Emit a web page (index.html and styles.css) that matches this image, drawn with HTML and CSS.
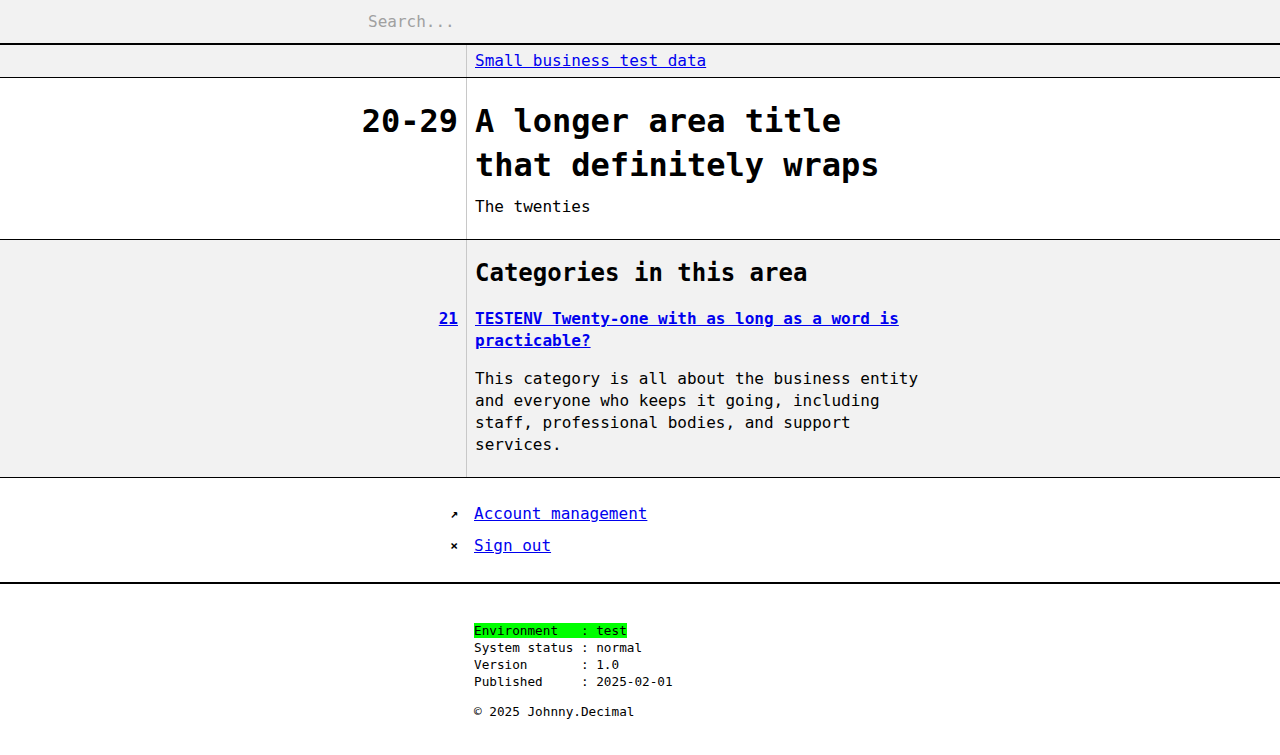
FILE: index.html
```html
<!DOCTYPE html>
<html lang="en">
<head>
<meta charset="utf-8">
<title>20-29 A longer area title that definitely wraps</title>
<link rel="stylesheet" href="styles.css">
</head>
<body>
<header class="search-bar">
  <div class="wrap">
    <input class="search-input" type="text" placeholder="Search...">
  </div>
</header>

<nav class="band band-grey band-crumbs">
  <div class="wrap grid">
    <div class="gutter crumbs-cell"></div>
    <div class="main crumbs-cell"><a href="#">Small business test data</a></div>
  </div>
</nav>

<section class="band band-area">
  <div class="wrap grid">
    <div class="gutter area-cell"><div class="area-id">20-29</div></div>
    <div class="main area-cell">
      <h1 class="area-title">A longer area title that definitely wraps</h1>
      <p class="area-sub">The twenties</p>
    </div>
  </div>
</section>

<section class="band band-grey band-cats">
  <div class="wrap grid">
    <div class="gutter cats-top"></div>
    <div class="main cats-top"><h2 class="cats-title">Categories in this area</h2></div>
    <div class="gutter cats-bottom"><a class="cat-id" href="#">21</a></div>
    <div class="main cats-bottom">
      <a class="cat-link" href="#">TESTENV Twenty-one with as long as a word is practicable?</a>
      <p class="cat-desc">This category is all about the business entity and everyone who keeps it going, including staff, professional bodies, and support services.</p>
    </div>
  </div>
</section>

<section class="band band-account">
  <ul class="wrap account-list">
    <li class="account-item"><span class="account-icon">↗</span><a href="#">Account management</a></li>
    <li class="account-item"><span class="account-icon">×</span><a href="#">Sign out</a></li>
  </ul>
</section>

<footer class="site-footer">
  <div class="wrap footer-inner">
    <div class="status">
      <div class="status-line"><span class="env">Environment   : test</span></div>
      <div class="status-line">System status : normal</div>
      <div class="status-line">Version       : 1.0</div>
      <div class="status-line">Published     : 2025-02-01</div>
    </div>
    <div class="copyright">© 2025 Johnny.Decimal</div>
  </div>
</footer>
</body>
</html>
```

FILE: styles.css
```css
* {
  box-sizing: border-box;
}

html, body {
  margin: 0;
  padding: 0;
  background: #fff;
  color: #000;
  font-family: "DejaVu Sans Mono", "Liberation Mono", monospace;
  font-size: 16px;
  line-height: 22px;
}

a {
  color: #0000ee;
}

.wrap {
  width: 560px;
  margin: 0 auto;
}

/* search */
.search-bar {
  background: #f2f2f2;
  border-bottom: 2px solid #000;
  height: 45px;
}

.search-input {
  display: block;
  width: 100%;
  height: 43px;
  border: none;
  background: transparent;
  padding: 0 8px;
  font-family: inherit;
  font-size: 16px;
  color: #000;
  outline: none;
}

.search-input::placeholder {
  color: #a0a0a0;
}

/* bands */
.band {
  border-bottom: 1px solid #000;
}

.band-grey {
  background: #f2f2f2;
}

.grid {
  display: grid;
  grid-template-columns: 107px 1fr;
}

.gutter {
  border-right: 1px solid #c8c8c8;
  padding-right: 8px;
  text-align: right;
}

.main {
  padding-left: 8px;
}

/* breadcrumb */
.crumbs-cell {
  padding-top: 5px;
  padding-bottom: 5px;
  min-height: 32px;
}

/* area */
.area-cell {
  padding-top: 21px;
  padding-bottom: 21px;
}

.area-id,
.area-title {
  font-size: 32px;
  line-height: 44px;
  font-weight: bold;
}

.area-title {
  margin: 0 0 9px;
}

.area-sub {
  margin: 0;
}

/* categories */
.cats-top {
  padding-top: 17px;
  padding-bottom: 19px;
}

.cats-title {
  margin: 0;
  font-size: 24px;
  line-height: 32px;
  font-weight: bold;
}

.cats-bottom {
  padding-bottom: 21px;
}

.cat-id,
.cat-link {
  font-weight: bold;
}

.cat-desc {
  margin: 16px 0 0;
}

/* account */
.band-account {
  border-bottom: 2px solid #000;
}

.account-list {
  list-style: none;
  margin: 0 auto;
  padding: 25px 0 25px;
  display: flex;
  flex-direction: column;
  gap: 10px;
}

.account-item {
  display: grid;
  grid-template-columns: 106px 1fr;
}

.account-icon {
  text-align: right;
  padding-right: 8px;
  font-size: 13px;
  font-weight: bold;
}

.account-item a {
  padding-left: 8px;
}

/* footer */
.footer-inner {
  padding: 38px 0 30px 114px;
  font-size: 12.7px;
  line-height: 17px;
}

.status-line {
  white-space: pre;
}

.env {
  background: #00ff00;
}

.copyright {
  margin-top: 13px;
}
```
